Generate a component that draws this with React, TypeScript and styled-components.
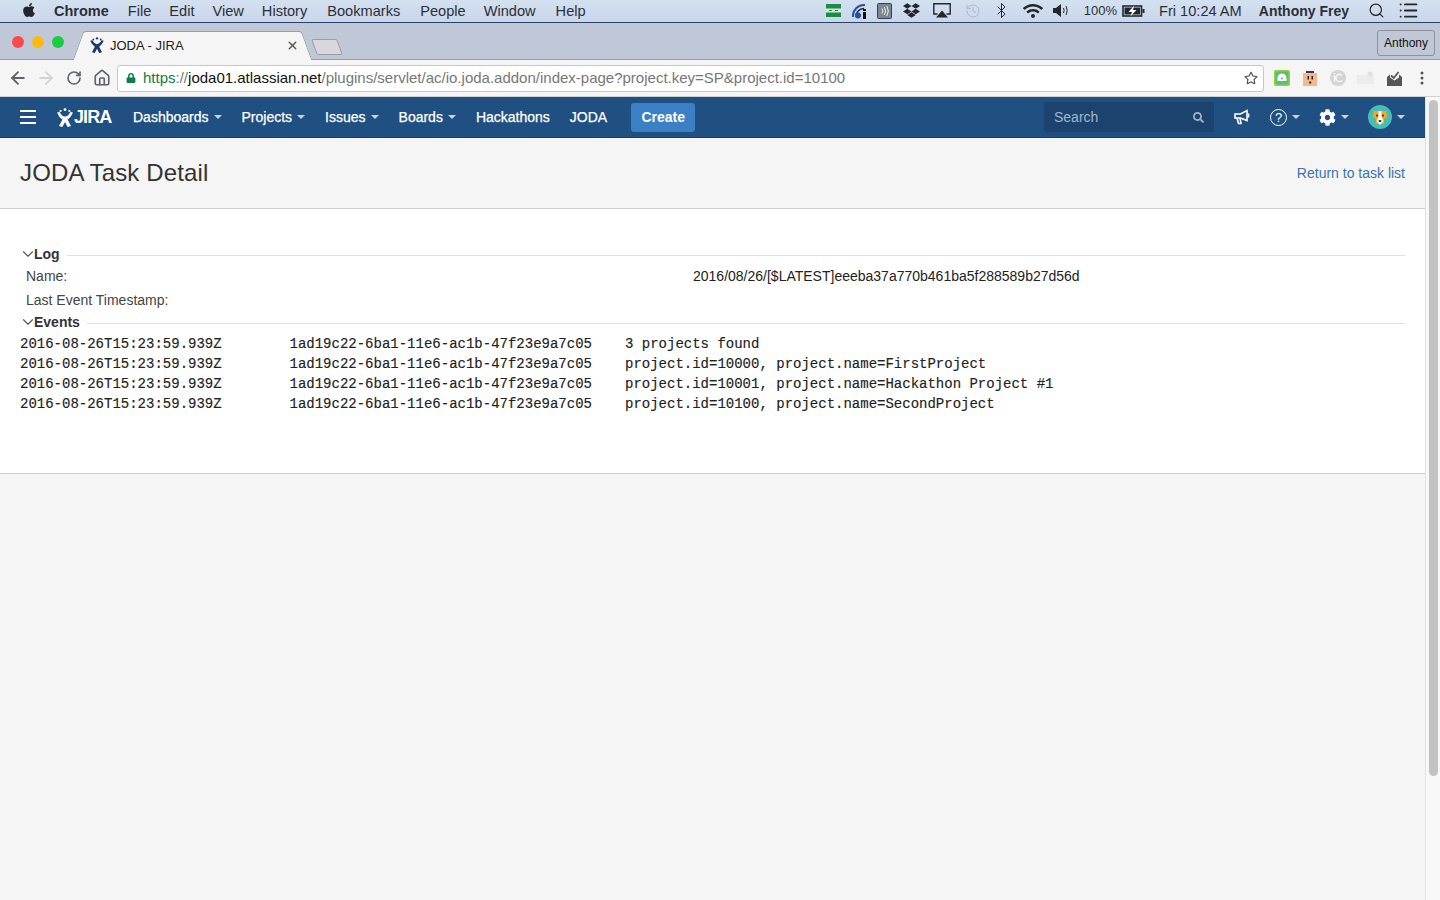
import React from 'react';
import styled, { createGlobalStyle } from 'styled-components';
import { FaApple, FaDropbox, FaWifi, FaCog, FaRegStar, FaLock, FaSearch } from 'react-icons/fa';
import { ArrowLeft, ArrowRight, RotateCw, Search, List, X, Home, History, Bluetooth, ChevronDown } from 'lucide-react';

const GlobalStyle = createGlobalStyle`
    html, body {
        margin: 0;
        padding: 0;
        height: 900px;
        overflow: hidden;
        background: #f5f5f5;
        font-family: "Liberation Sans", Arial, sans-serif;
    }
    * { box-sizing: border-box; }
`;

const Screen = styled.div`
    width: 1440px;
    height: 900px;
    display: flex;
    flex-direction: column;
    overflow: hidden;
`;

const MenuBar = styled.div`
    height: 23px;
    flex: none;
    display: flex;
    align-items: center;
    padding: 0 22px 1px 21px;
    background: linear-gradient(#d3e0f0, #c9d7ea);
    border-bottom: 1px solid #27406a;
    color: #2b2f38;
    font-size: 14.6px;
`;

const AppleSlot = styled.span`
    display: flex;
    margin-bottom: 2px;
    color: #23262e;
`;

const MenuItem = styled.span<{ $bold?: boolean; $gap: number; $size?: number }>`
    margin-left: ${(p) => p.$gap}px;
    font-weight: ${(p) => (p.$bold ? 700 : 400)};
    font-size: ${(p) => p.$size ?? 14.6}px;
    white-space: nowrap;
`;

const Spacer = styled.div`
    flex: 1;
`;

const StatusSlot = styled.span<{ $w: number; $gap: number; $color?: string }>`
    width: ${(p) => p.$w}px;
    margin-left: ${(p) => p.$gap}px;
    display: flex;
    justify-content: center;
    align-items: center;
    color: ${(p) => p.$color ?? '#23262e'};
    flex: none;
    svg { flex: none; }
`;

const TabStrip = styled.div`
    height: 37px;
    flex: none;
    display: flex;
    align-items: flex-end;
    padding-left: 12px;
    background: #c0c7d6;
    border-bottom: 1px solid #9a9da5;
    position: relative;
`;

const Lights = styled.div`
    display: flex;
    gap: 8px;
    align-self: flex-start;
    margin-top: 13px;
`;

const Light = styled.span<{ $c: string }>`
    width: 12px;
    height: 12px;
    border-radius: 50%;
    background: ${(p) => p.$c};
`;

const Tab = styled.div`
    position: relative;
    width: 205px;
    height: 29px;
    margin: 0 0 -1px 26px;
    padding: 0 0 2px;
    display: flex;
    align-items: center;
    font-size: 13px;
    color: #222;
    z-index: 1;
    background: #f5f5f5;
    border-top: 1px solid #9a9da5;
    &::before, &::after {
        content: '';
        position: absolute;
        top: -1px;
        bottom: 0;
        width: 24px;
        background: #f5f5f5;
        border-top: 1px solid #9a9da5;
        z-index: -1;
    }
    &::before {
        left: -12px;
        transform: skewX(-20deg);
        border-left: 1px solid #9a9da5;
        border-top-left-radius: 3px;
    }
    &::after {
        right: -12px;
        transform: skewX(20deg);
        border-right: 1px solid #9a9da5;
        border-top-right-radius: 3px;
    }
`;

const TabTitle = styled.span`
    margin-left: 6px;
    flex: 1;
`;

const TabClose = styled.span`
    display: flex;
    margin-right: -4px;
    color: #555;
`;

const NewTab = styled.div`
    width: 26px;
    height: 16px;
    margin: 0 0 4px 19px;
    background: #d8d8dc;
    border: 1px solid #9a9da5;
    border-radius: 2px;
    transform: skewX(20deg);
`;

const ProfileButton = styled.div`
    position: absolute;
    right: 5px;
    top: 7px;
    width: 58px;
    height: 26px;
    border: 1px solid #8e929c;
    border-radius: 3px;
    display: flex;
    align-items: center;
    justify-content: center;
    font-size: 12px;
    color: #111;
`;

const Toolbar = styled.div`
    height: 37px;
    flex: none;
    display: flex;
    align-items: center;
    padding: 0 10px 0 9px;
    background: #f5f5f5;
    border-bottom: 1px solid #d0d0d0;
`;

const NavButtons = styled.div`
    display: flex;
    gap: 10px;
`;

const NavButton = styled.span<{ $color?: string }>`
    width: 18px;
    flex: none;
    display: flex;
    align-items: center;
    justify-content: center;
    color: ${(p) => p.$color ?? '#5f6368'};
    svg { flex: none; }
`;

const Omnibox = styled.div`
    flex: none;
    width: 1147px;
    height: 27px;
    margin-left: 6px;
    padding: 0 5px 1px 8px;
    display: flex;
    align-items: center;
    background: #fff;
    border: 1px solid #c8c8c8;
    border-radius: 3px;
    font-size: 15px;
    white-space: nowrap;
`;

const UrlSecure = styled.span`
    color: #0b8043;
    margin-left: 7px;
`;
const UrlGrey = styled.span`
    color: #777;
`;
const UrlDark = styled.span`
    color: #111;
`;

const ExtIcons = styled.div`
    display: flex;
    align-items: center;
    margin-left: 9px;
    gap: 10px;
`;

const ExtSlot = styled.span`
    width: 18px;
    height: 18px;
    flex: none;
    display: flex;
    align-items: center;
    justify-content: center;
`;

const Body = styled.div`
    flex: 1;
    display: flex;
    min-height: 0;
`;

const Main = styled.div`
    width: 1425px;
    flex: none;
    display: flex;
    flex-direction: column;
`;

const ScrollTrack = styled.div`
    flex: 1;
    padding: 3px 2px 0 3px;
    background: #f8f8f8;
    border-left: 1px solid #e4e4e4;
`;

const ScrollThumb = styled.div`
    height: 676px;
    background: #c2c2c2;
    border-radius: 5px;
`;

const JiraNav = styled.nav`
    height: 41px;
    flex: none;
    display: flex;
    align-items: center;
    padding: 0 20px;
    background: #205081;
    border-bottom: 1px solid #1a3f69;
    color: #fff;
    font-size: 14px;
`;

const Logo = styled.div`
    display: flex;
    align-items: center;
    gap: 1px;
    margin-left: 21px;
    width: 55px;
    font-weight: 700;
    font-size: 18px;
    letter-spacing: -0.9px;
`;

const NavItem = styled.span<{ $gap?: number }>`
    display: flex;
    align-items: center;
    margin-left: ${(p) => p.$gap ?? 20}px;
    white-space: nowrap;
    -webkit-text-stroke: 0.25px #fff;
`;

const Caret = styled.span`
    width: 0;
    height: 0;
    margin-left: 5px;
    border-left: 4px solid transparent;
    border-right: 4px solid transparent;
    border-top: 4px solid rgba(255, 255, 255, 0.75);
`;

const CreateButton = styled.span`
    width: 64px;
    height: 29px;
    margin-left: 24px;
    display: flex;
    align-items: center;
    justify-content: center;
    background: #3b7fc4;
    border-radius: 3px;
    font-weight: 700;
`;

const SearchBox = styled.div`
    width: 170px;
    height: 30px;
    display: flex;
    align-items: center;
    justify-content: space-between;
    padding: 0 10px;
    background: #1c426e;
    border-radius: 3px;
    color: #a4b5c9;
`;

const IconItem = styled.span<{ $gap: number }>`
    display: flex;
    align-items: center;
    margin-left: ${(p) => p.$gap}px;
`;

const HelpIcon = styled.span`
    width: 17px;
    height: 17px;
    display: flex;
    align-items: center;
    justify-content: center;
    border: 1.5px solid #fff;
    border-radius: 50%;
    font-size: 13px;
`;

const PageHeader = styled.header`
    height: 71px;
    flex: none;
    display: flex;
    align-items: center;
    justify-content: space-between;
    padding: 0 20px;
    background: #f5f5f5;
    border-bottom: 1px solid #ccc;
`;

const PageTitle = styled.h1`
    margin: 0;
    font-size: 24px;
    font-weight: 400;
    letter-spacing: 0.13px;
    color: #333;
`;

const ReturnLink = styled.a`
    font-size: 14px;
    color: #3b73af;
`;

const Panel = styled.section`
    height: 265px;
    flex: none;
    padding: 36px 20px 0;
    background: #fff;
    border-bottom: 1px solid #ccc;
    color: #333;
    font-size: 14px;
`;

const SectionHead = styled.div`
    height: 18px;
    display: flex;
    align-items: center;
    color: #333;
    font-weight: 700;
    &::after {
        content: '';
        flex: 1;
        height: 1px;
        margin: 2px 0 0 7px;
        background: #e3e3e3;
    }
`;

const Chevron = styled.span`
    display: flex;
    width: 14px;
    flex: none;
    color: #555;
    svg { flex: none; margin-left: -1px; }
`;

const FieldRow = styled.div<{ $h: number; $lift?: number }>`
    height: ${(p) => p.$h}px;
    padding: 0 0 ${(p) => p.$lift ?? 0}px 6px;
    display: flex;
    align-items: center;
    color: #444;
`;

const FieldLabel = styled.span`
    width: 667px;
    flex: none;
`;

const FieldValue = styled.span`
    color: #222;
`;

const EventsTable = styled.div`
    margin-top: 3px;
    font-family: "Liberation Mono", "Courier New", monospace;
    font-size: 14px;
    color: #222;
    -webkit-text-stroke: 0.15px #222;
`;

const EventRow = styled.div`
    height: 20px;
    display: grid;
    grid-template-columns: 269.5px 335.5px 1fr;
    align-items: center;
    white-space: pre;
`;

const events = [
    '3 projects found',
    'project.id=10000, project.name=FirstProject',
    'project.id=10001, project.name=Hackathon Project #1',
    'project.id=10100, project.name=SecondProject',
];

const menus = [
    { label: 'File', gap: 19 },
    { label: 'Edit', gap: 18 },
    { label: 'View', gap: 18 },
    { label: 'History', gap: 18 },
    { label: 'Bookmarks', gap: 20 },
    { label: 'People', gap: 20 },
    { label: 'Window', gap: 18 },
    { label: 'Help', gap: 20 },
];

const JiraMark = () => (
    <svg width="16" height="19" viewBox="0 0 16 19" fill="currentColor">
        <circle cx="8" cy="1.6" r="1.4" />
        <circle cx="3.6" cy="3" r="1.1" />
        <circle cx="12.4" cy="3" r="1.1" />
        <path d="M0 4.5 L2.6 4 Q5 8.5 8 8.5 Q11 8.5 13.4 4 L16 4.5 Q14 9.5 10.6 11.5 L14 18 L10.6 19 L8 14 L5.4 19 L2 18 L5.4 11.5 Q2 9.5 0 4.5 Z" />
    </svg>
);

const Hamburger = () => (
    <svg width="16" height="14" viewBox="0 0 16 14" stroke="currentColor" strokeWidth="2">
        <path d="M0 1 H16 M0 7 H16 M0 13 H16" />
    </svg>
);

const Bullhorn = () => (
    <svg width="16" height="16" viewBox="0 0 16 16" fill="none" stroke="#fff" strokeWidth="1.6">
        <path d="M1 5 H6.5 L13 1.5 V11.5 L6.5 9 H1 Z" />
        <path d="M3 9 L4.5 14.5 H7 L6 9" />
        <path d="M14.5 4.5 V8.5" />
    </svg>
);

const DogAvatar = () => (
    <svg width="24" height="24" viewBox="0 0 24 24">
        <circle cx="12" cy="12" r="12" fill="#47bdb5" />
        <path d="M6 6 H18 L19 12 L16 14 V19 H8 V14 L5 12 Z" fill="#f5a623" />
        <path d="M10.5 6 H13.5 V12 L15.5 16 L12 20 L8.5 16 L10.5 12 Z" fill="#fff" />
        <circle cx="9" cy="10.5" r="1" fill="#222" />
        <circle cx="15" cy="10.5" r="1" fill="#222" />
        <ellipse cx="12" cy="16" rx="1.5" ry="1" fill="#222" />
    </svg>
);

const App = () => {
    return (
        <Screen>
            <GlobalStyle />
            <MenuBar>
                <AppleSlot><FaApple size={16} /></AppleSlot>
                <MenuItem $bold $gap={17} $size={14.5}>Chrome</MenuItem>
                {menus.map((m) => (
                    <MenuItem key={m.label} $gap={m.gap}>{m.label}</MenuItem>
                ))}
                <Spacer />
                <StatusSlot $w={15} $gap={0}>
                    <svg width="15" height="13" viewBox="0 0 15 13">
                        <rect width="15" height="13" fill="#1c8a4a" />
                        <rect y="4.5" width="15" height="4" fill="#cfe8d8" />
                        <path d="M3 6.5 H6 M9 6.5 H12" stroke="#1c8a4a" />
                    </svg>
                </StatusSlot>
                <StatusSlot $w={16} $gap={11}>
                    <svg width="16" height="16" viewBox="0 0 16 16" fill="none">
                        <path d="M1 14 A11 11 0 0 1 13 2" stroke="#1f4fb0" strokeWidth="2" />
                        <path d="M4 14 A8 8 0 0 1 12 5.5" stroke="#222" strokeWidth="1.6" />
                        <circle cx="6" cy="12.5" r="3" fill="#1f4fb0" />
                        <rect x="11" y="9" width="3" height="7" fill="#111" />
                        <rect x="11" y="6" width="3" height="2" fill="#111" />
                    </svg>
                </StatusSlot>
                <StatusSlot $w={15} $gap={9}>
                    <svg width="15" height="16" viewBox="0 0 15 16" fill="none">
                        <rect x=".5" y=".5" width="14" height="15" rx="1" fill="#7c8794" stroke="#3a3f48" />
                        <path d="M5 5.5 Q6.8 8 5 10.5 M7.3 4 Q10 8 7.3 12 M9.8 3 Q12.8 8 9.8 13" stroke="#e8edf2" />
                    </svg>
                </StatusSlot>
                <StatusSlot $w={16} $gap={12}><FaDropbox size={17} /></StatusSlot>
                <StatusSlot $w={18} $gap={13}>
                    <svg width="18" height="15" viewBox="0 0 18 15" fill="none">
                        <path d="M4.5 11 H.8 V.8 H17.2 V11 H13.5" stroke="#23262e" strokeWidth="1.4" />
                        <path d="M9 7.5 L15 14.5 H3 Z" fill="#23262e" />
                    </svg>
                </StatusSlot>
                <StatusSlot $w={16} $gap={14} $color="#a9b2bf"><History size={16} strokeWidth={1.4} /></StatusSlot>
                <StatusSlot $w={10} $gap={16}><Bluetooth size={17} strokeWidth={1.4} /></StatusSlot>
                <StatusSlot $w={20} $gap={16}><FaWifi size={20} /></StatusSlot>
                <StatusSlot $w={17} $gap={10}>
                    <svg width="17" height="13" viewBox="0 0 17 13" fill="none">
                        <path d="M0 4 H3 L8 0 V13 L3 9 H0 Z" fill="#23262e" />
                        <path d="M10.5 4 Q11.8 6.5 10.5 9 M13 2 Q15.5 6.5 13 11" stroke="#23262e" />
                    </svg>
                </StatusSlot>
                <MenuItem $gap={14} $size={13}>100%</MenuItem>
                <StatusSlot $w={23} $gap={5}>
                    <svg width="23" height="12" viewBox="0 0 23 12">
                        <rect x="1" y="1" width="18.5" height="10" fill="none" stroke="#23262e" strokeWidth="1.6" />
                        <rect x="2.5" y="2.5" width="15.5" height="7" fill="#23262e" />
                        <path d="M12 0.8 L6.5 7 H10 L8.5 11.2 L14.5 5 H11 Z" fill="#fff" />
                        <rect x="20.5" y="4" width="2" height="4" fill="#23262e" />
                    </svg>
                </StatusSlot>
                <MenuItem $gap={14}>Fri 10:24 AM</MenuItem>
                <MenuItem $bold $gap={17} $size={14}>Anthony Frey</MenuItem>
                <StatusSlot $w={15} $gap={20}><Search size={17} strokeWidth={1.7} /></StatusSlot>
                <StatusSlot $w={19} $gap={15}><List size={21} strokeWidth={2.2} /></StatusSlot>
            </MenuBar>

            <TabStrip>
                <Lights>
                    <Light $c="#fc4a4a" />
                    <Light $c="#fdb90f" />
                    <Light $c="#1ccb45" />
                </Lights>
                <Tab>
                    <svg width="14" height="16" viewBox="0 0 16 19" fill="#1b3a6b">
                        <circle cx="8" cy="1.6" r="1.4" />
                        <circle cx="3.6" cy="3" r="1.1" />
                        <circle cx="12.4" cy="3" r="1.1" />
                        <path d="M0 4.5 L2.6 4 Q5 8.5 8 8.5 Q11 8.5 13.4 4 L16 4.5 Q14 9.5 10.6 11.5 L14 18 L10.6 19 L8 14 L5.4 19 L2 18 L5.4 11.5 Q2 9.5 0 4.5 Z" />
                    </svg>
                    <TabTitle>JODA - JIRA</TabTitle>
                    <TabClose><X size={13} strokeWidth={2.5} /></TabClose>
                </Tab>
                <NewTab />
                <ProfileButton>Anthony</ProfileButton>
            </TabStrip>

            <Toolbar>
                <NavButtons>
                    <NavButton><ArrowLeft size={20} strokeWidth={2.2} /></NavButton>
                    <NavButton $color="#d4d4d4"><ArrowRight size={20} strokeWidth={2.2} /></NavButton>
                    <NavButton><RotateCw size={16} strokeWidth={2.4} /></NavButton>
                    <NavButton><Home size={18} strokeWidth={2.2} /></NavButton>
                </NavButtons>
                <Omnibox>
                    <FaLock size={10} color="#0b8043" />
                    <UrlSecure>https</UrlSecure>
                    <UrlGrey>://</UrlGrey>
                    <UrlDark>joda01.atlassian.net</UrlDark>
                    <UrlGrey>/plugins/servlet/ac/io.joda.addon/index-page?project.key=SP&amp;project.id=10100</UrlGrey>
                    <Spacer />
                    <FaRegStar size={14} color="#555" />
                </Omnibox>
                <ExtIcons>
                    <ExtSlot>
                        <svg width="16" height="16" viewBox="0 0 16 16">
                            <rect width="16" height="16" rx="2" fill="#9ccc3a" />
                            <rect x="1.5" y="1.5" width="13" height="13" rx="2" fill="#55c07a" />
                            <path d="M3.5 11 V8 A4.5 4.5 0 0 1 12.5 8 V11 Z" fill="#fff" />
                            <circle cx="8" cy="8.5" r="1" fill="#55c07a" />
                        </svg>
                    </ExtSlot>
                    <ExtSlot>
                        <svg width="14" height="15" viewBox="0 0 14 15">
                            <rect y="2" width="14" height="13" fill="#f5b88a" />
                            <rect x="3" width="8" height="2" fill="#3a3560" />
                            <rect x="4.5" y="5" width="1.5" height="3.5" fill="#222" />
                            <rect x="8.5" y="5" width="1.5" height="3.5" fill="#222" />
                            <rect x="6.2" y="10.5" width="2" height="2" fill="#222" />
                        </svg>
                    </ExtSlot>
                    <ExtSlot>
                        <svg width="16" height="16" viewBox="0 0 16 16" fill="none">
                            <circle cx="8" cy="8" r="8" fill="#d4d4d4" />
                            <path d="M4.5 5 V12 M4.5 3 V4 M12 5.5 A3.5 3.5 0 1 0 12 10.5" stroke="#f5f5f5" strokeWidth="1.4" />
                        </svg>
                    </ExtSlot>
                    <ExtSlot>
                        <svg width="18" height="14" viewBox="0 0 18 14">
                            <rect y="4" width="17" height="9" fill="#ececec" />
                            <circle cx="13" cy="3" r="2.5" fill="#e0e0e0" />
                        </svg>
                    </ExtSlot>
                    <ExtSlot>
                        <svg width="15" height="15" viewBox="0 0 15 15">
                            <path d="M0 6 L3 3.5 V6.5 L7.5 9.5 L12 6.5 V3.5 L15 6 V15 H0 Z" fill="#555" />
                            <path d="M4 4.5 L6.8 7 L11.5 1" fill="none" stroke="#555" strokeWidth="1.8" />
                        </svg>
                    </ExtSlot>
                    <ExtSlot>
                        <svg width="4" height="14" viewBox="0 0 4 14" fill="#555">
                            <circle cx="2" cy="2" r="1.5" />
                            <circle cx="2" cy="7" r="1.5" />
                            <circle cx="2" cy="12" r="1.5" />
                        </svg>
                    </ExtSlot>
                </ExtIcons>
            </Toolbar>

            <Body>
                <Main>
                    <JiraNav>
                        <Hamburger />
                        <Logo><JiraMark />JIRA</Logo>
                        <NavItem $gap={21}>Dashboards<Caret /></NavItem>
                        <NavItem>Projects<Caret /></NavItem>
                        <NavItem>Issues<Caret /></NavItem>
                        <NavItem>Boards<Caret /></NavItem>
                        <NavItem>Hackathons</NavItem>
                        <NavItem>JODA</NavItem>
                        <CreateButton>Create</CreateButton>
                        <Spacer />
                        <SearchBox>
                            Search
                            <FaSearch size={11} color="#a4b5c9" />
                        </SearchBox>
                        <IconItem $gap={20}><Bullhorn /></IconItem>
                        <IconItem $gap={20}><HelpIcon>?</HelpIcon><Caret /></IconItem>
                        <IconItem $gap={19}><FaCog size={17} /><Caret /></IconItem>
                        <IconItem $gap={19}><DogAvatar /><Caret /></IconItem>
                    </JiraNav>
                    <PageHeader>
                        <PageTitle>JODA Task Detail</PageTitle>
                        <ReturnLink>Return to task list</ReturnLink>
                    </PageHeader>
                    <Panel>
                        <SectionHead>
                            <Chevron><ChevronDown size={18} strokeWidth={1.5} /></Chevron>
                            Log
                        </SectionHead>
                        <FieldRow $h={26}>
                            <FieldLabel>Name:</FieldLabel>
                            <FieldValue>2016/08/26/[$LATEST]eeeba37a770b461ba5f288589b27d56d</FieldValue>
                        </FieldRow>
                        <FieldRow $h={24} $lift={2}>
                            <FieldLabel>Last Event Timestamp:</FieldLabel>
                        </FieldRow>
                        <SectionHead>
                            <Chevron><ChevronDown size={18} strokeWidth={1.5} /></Chevron>
                            Events
                        </SectionHead>
                        <EventsTable>
                            {events.map((text) => (
                                <EventRow key={text}>
                                    <span>2016-08-26T15:23:59.939Z</span>
                                    <span>1ad19c22-6ba1-11e6-ac1b-47f23e9a7c05</span>
                                    <span>{text}</span>
                                </EventRow>
                            ))}
                        </EventsTable>
                    </Panel>
                </Main>
                <ScrollTrack>
                    <ScrollThumb />
                </ScrollTrack>
            </Body>
        </Screen>
    );
};

export default App;
